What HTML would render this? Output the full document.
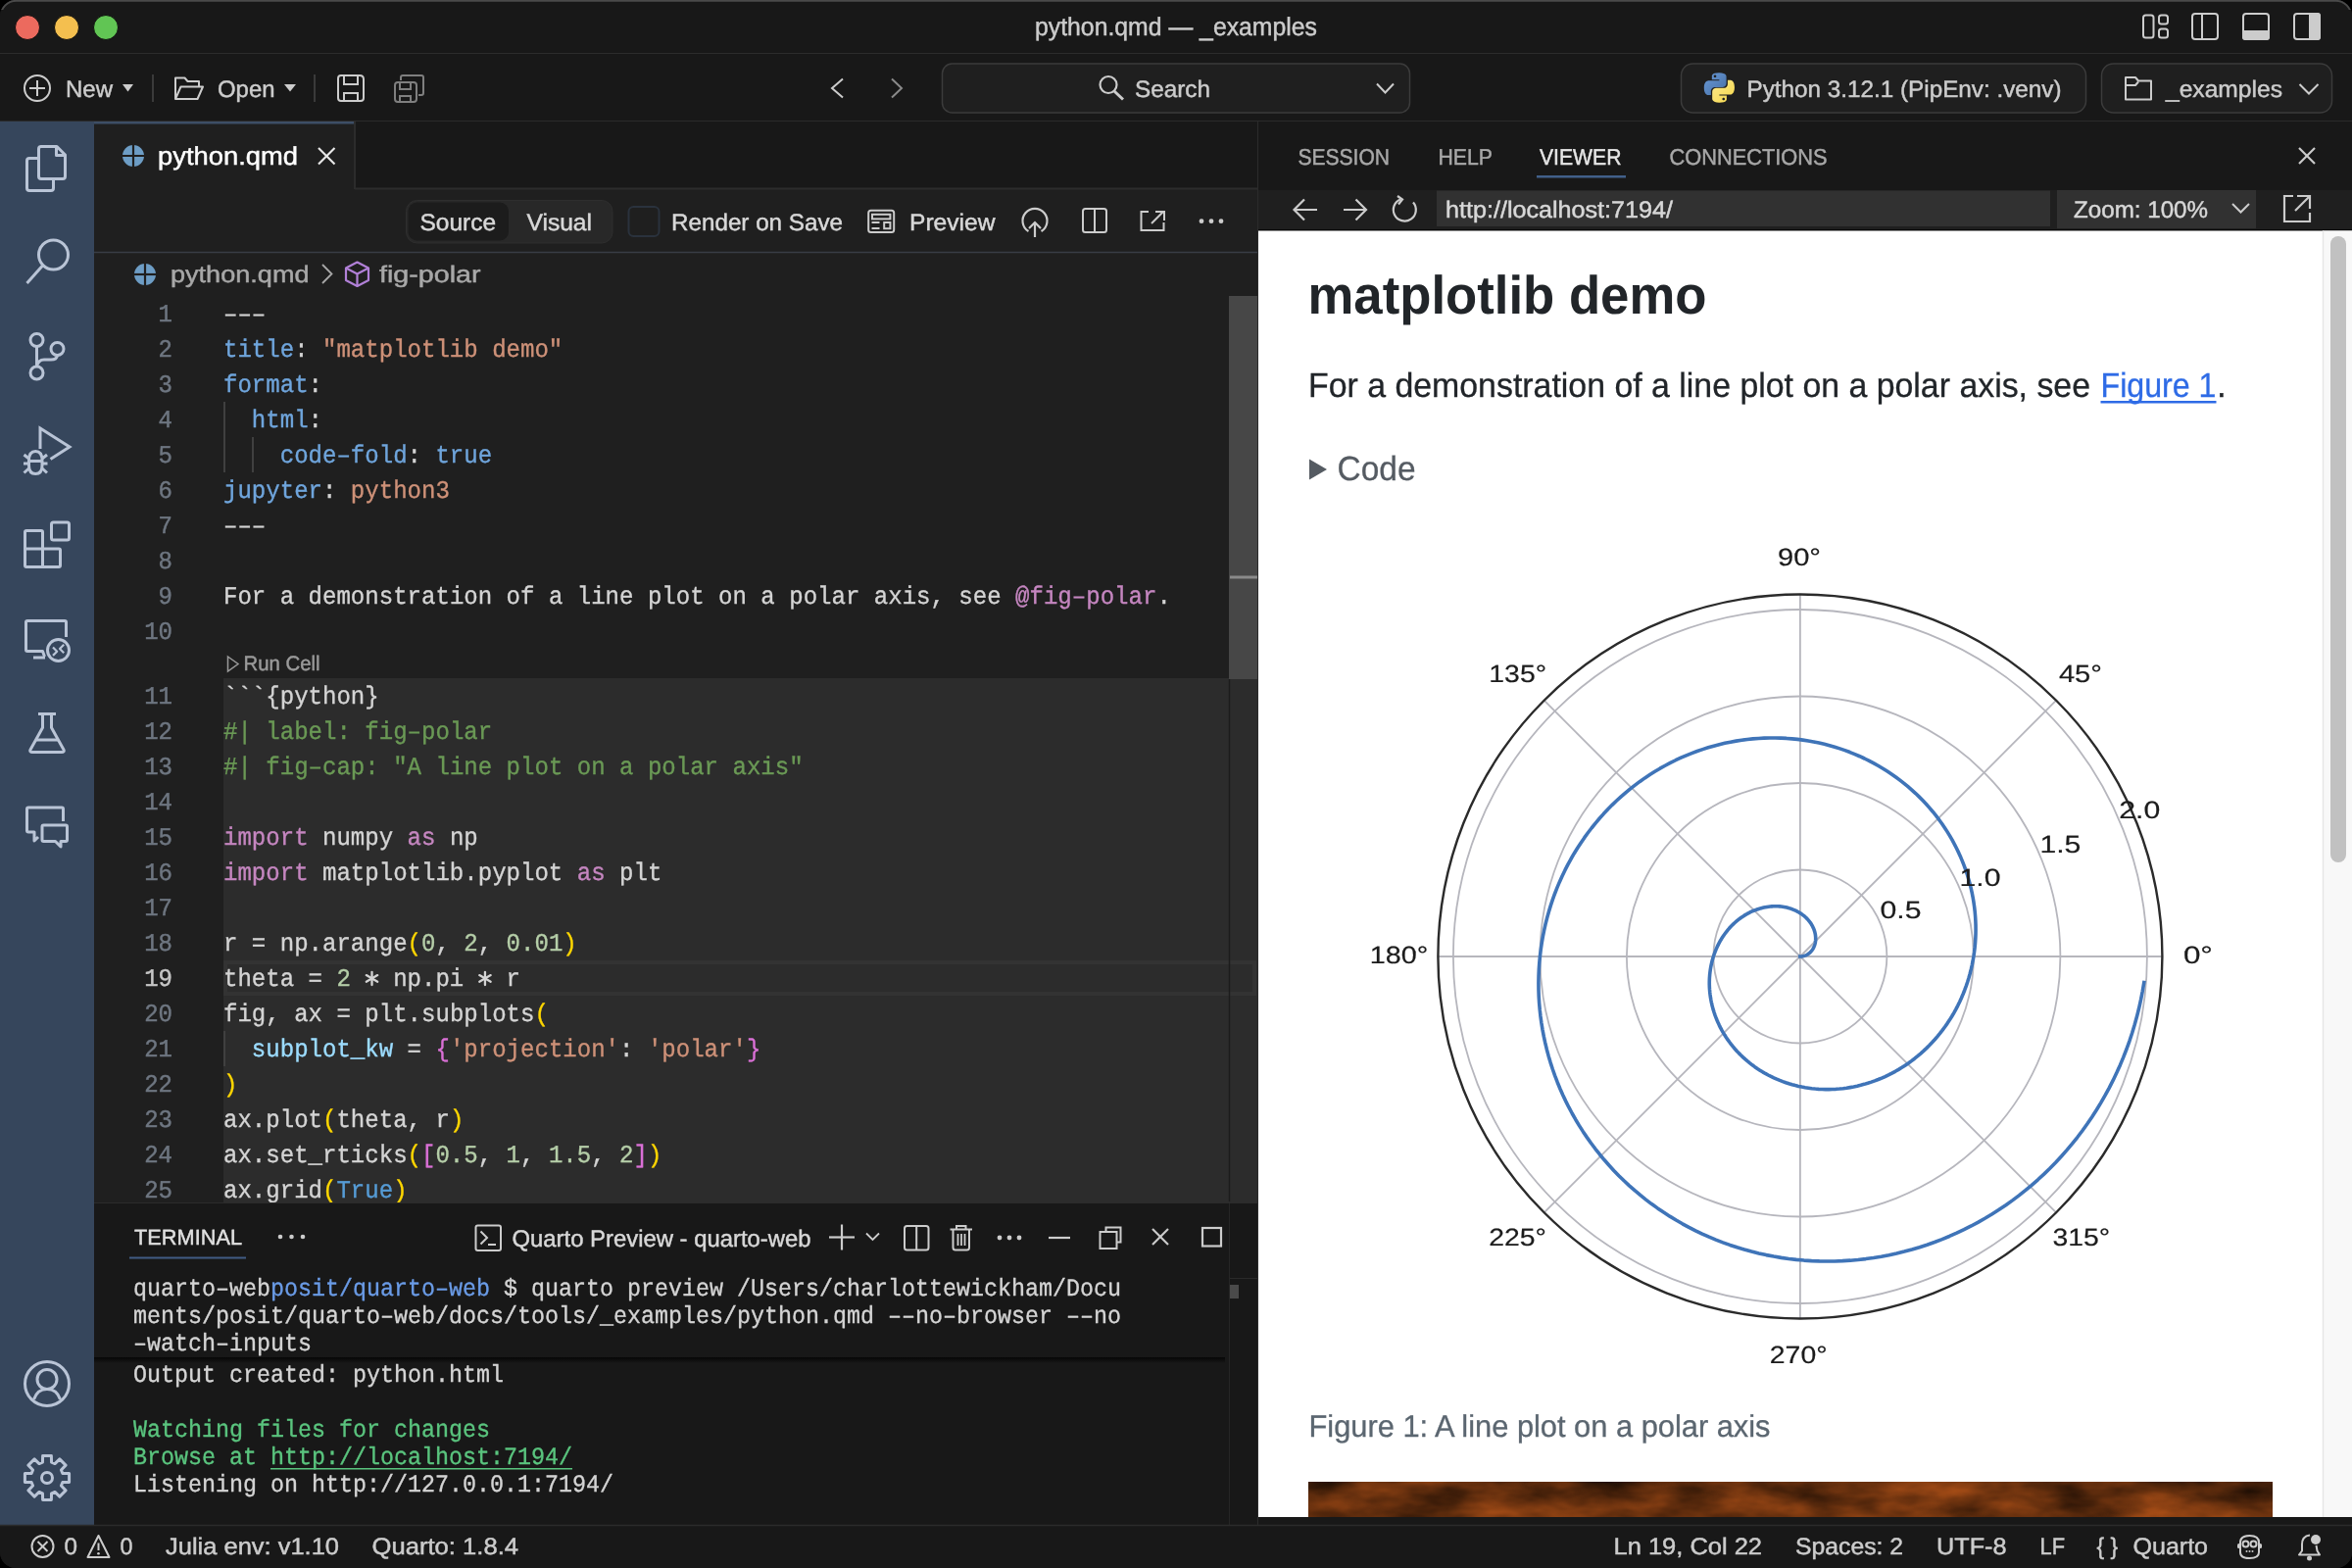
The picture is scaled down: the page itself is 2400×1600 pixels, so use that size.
<!DOCTYPE html>
<html><head><meta charset="utf-8"><title>Positron</title>
<style>html,body{margin:0;padding:0;background:#000;width:2400px;height:1600px;overflow:hidden} svg{display:block;will-change:transform}</style>
</head><body>
<svg width="2400" height="1600" viewBox="0 0 2400 1600" text-rendering="geometricPrecision">
<rect x="0" y="0" width="2400" height="1600" fill="#000"/>
<clipPath id="win"><rect x="0" y="0" width="2400" height="1600" rx="16"/></clipPath>
<g clip-path="url(#win)">
<rect x="0" y="0" width="2400" height="1600" rx="0" fill="#181818"/>
<rect x="0" y="0" width="2400" height="55" rx="0" fill="#181818"/>
<line x1="0" y1="54.5" x2="2400" y2="54.5" stroke="#2c2c2c" stroke-width="1"/>
<circle cx="28" cy="28" r="12.5" fill="#ec6a5e" stroke="#101010" stroke-width="1"/>
<circle cx="68" cy="28" r="12.5" fill="#f4bf4f" stroke="#101010" stroke-width="1"/>
<circle cx="108" cy="28" r="12.5" fill="#61c554" stroke="#101010" stroke-width="1"/>
<text x="1200.00" y="36.00" font-family='"Liberation Sans", sans-serif' font-size="26" fill="#cccccc" text-anchor="middle" font-weight="normal" textLength="288.00" lengthAdjust="spacingAndGlyphs" stroke="#cccccc" stroke-width="0.45">python.qmd — _examples</text>
<rect x="2187" y="15.5" width="10.5" height="23" rx="2.5" fill="none" stroke="#cccccc" stroke-width="2"/>
<rect x="2203" y="15.5" width="9" height="9" rx="2.5" fill="none" stroke="#cccccc" stroke-width="2"/>
<rect x="2203" y="29.5" width="9" height="9" rx="2.5" fill="none" stroke="#cccccc" stroke-width="2"/>
<rect x="2237" y="14" width="26" height="26" rx="3" fill="none" stroke="#cccccc" stroke-width="2"/>
<line x1="2247" y1="14" x2="2247" y2="40" stroke="#cccccc" stroke-width="2"/>
<rect x="2289" y="14" width="26" height="26" rx="3" fill="none" stroke="#cccccc" stroke-width="2"/>
<rect x="2288" y="31" width="28" height="10" rx="3" fill="#cccccc"/>
<rect x="2288" y="31" width="28" height="4" rx="0" fill="#cccccc"/>
<rect x="2341" y="14" width="26" height="26" rx="3" fill="none" stroke="#cccccc" stroke-width="2"/>
<rect x="2356" y="13" width="12" height="28" rx="3" fill="#cccccc"/>
<rect x="2356" y="13" width="5" height="28" rx="0" fill="#cccccc"/>
<rect x="0" y="55" width="2400" height="68" rx="0" fill="#181818"/>
<line x1="0" y1="123.5" x2="2400" y2="123.5" stroke="#2b2b2b" stroke-width="1"/>
<circle cx="38" cy="90" r="13" fill="none" stroke="#cccccc" stroke-width="2"/>
<line x1="38" y1="82" x2="38" y2="98" stroke="#cccccc" stroke-width="2"/>
<line x1="30" y1="90" x2="46" y2="90" stroke="#cccccc" stroke-width="2"/>
<text x="67.00" y="98.50" font-family='"Liberation Sans", sans-serif' font-size="24" fill="#cccccc" text-anchor="start" font-weight="normal" textLength="48.00" lengthAdjust="spacingAndGlyphs" stroke="#cccccc" stroke-width="0.45">New</text>
<path d="M125 86 L136 86 L130.5 93.5 Z" stroke="none" stroke-width="2" fill="#cccccc"/>
<line x1="156" y1="76" x2="156" y2="104" stroke="#3a3a3a" stroke-width="2"/>
<path d="M179 101 L179 79.5 L188.5 79.5 L191.5 83 L203 83 L203 88 M179 101 L184.5 88.5 L207 88.5 L201.5 101 Z" stroke="#cccccc" stroke-width="2" fill="none" stroke-linejoin="round"/>
<text x="222.00" y="98.50" font-family='"Liberation Sans", sans-serif' font-size="24" fill="#cccccc" text-anchor="start" font-weight="normal" textLength="58.50" lengthAdjust="spacingAndGlyphs" stroke="#cccccc" stroke-width="0.45">Open</text>
<path d="M290 86 L302 86 L296 93.5 Z" stroke="none" stroke-width="2" fill="#cccccc"/>
<line x1="321" y1="76" x2="321" y2="104" stroke="#3a3a3a" stroke-width="2"/>
<path d="M345 80 Q345 77 348 77 L367 77 Q371 77 371 81 L371 100 Q371 103 368 103 L348 103 Q345 103 345 100 Z" stroke="#cccccc" stroke-width="2" fill="none"/>
<path d="M351 77 L351 86 L365 86 L365 77" stroke="#cccccc" stroke-width="2" fill="none"/>
<path d="M351 103 L351 95 L365 95 L365 103" stroke="#cccccc" stroke-width="2" fill="none"/>
<path d="M409 82 L409 79 Q409 77 411 77 L430 77 Q432 77 432 79 L432 95 Q432 97 430 97 L427 97" stroke="#7f7f7f" stroke-width="2" fill="none"/>
<path d="M403 87 Q403 84 406 84 L422 84 Q425 84 425 87 L425 101 Q425 104 422 104 L406 104 Q403 104 403 101 Z" stroke="#7f7f7f" stroke-width="2" fill="none"/>
<path d="M408 84 L408 91 L419 91 L419 84" stroke="#7f7f7f" stroke-width="2" fill="none"/>
<path d="M408 104 L408 98 L419 98 L419 104" stroke="#7f7f7f" stroke-width="2" fill="none"/>
<path d="M860 80.5 L849 90 L860 99.5" stroke="#cccccc" stroke-width="2" fill="none"/>
<path d="M910 80.5 L920 90 L910 99.5" stroke="#8a8a8a" stroke-width="2" fill="none"/>
<rect x="961.5" y="65" width="477" height="50" rx="10" fill="#1f1f1f" stroke="#3b3b3b" stroke-width="1.5"/>
<circle cx="1131" cy="86.5" r="8.5" fill="none" stroke="#cccccc" stroke-width="2.2"/>
<line x1="1137" y1="93" x2="1146" y2="101.5" stroke="#cccccc" stroke-width="3"/>
<text x="1158.00" y="98.50" font-family='"Liberation Sans", sans-serif' font-size="24" fill="#cccccc" text-anchor="start" font-weight="normal" textLength="77.00" lengthAdjust="spacingAndGlyphs" stroke="#cccccc" stroke-width="0.45">Search</text>
<path d="M1405 85.5 L1413.5 94.5 L1422 85.5" stroke="#cccccc" stroke-width="2" fill="none"/>
<rect x="1715.5" y="65" width="413" height="50" rx="12" fill="#1f1f1f" stroke="#3b3b3b" stroke-width="1.5"/>
<defs><linearGradient id="pyb" x1="0" y1="0" x2="1" y2="1"><stop offset="0" stop-color="#6a9ad8"/><stop offset="1" stop-color="#456ea3"/></linearGradient><linearGradient id="pyy" x1="0" y1="0" x2="1" y2="1"><stop offset="0" stop-color="#fbe88e"/><stop offset="1" stop-color="#f6d84a"/></linearGradient></defs><g transform="translate(1738.8,73.5) scale(0.335)">
<path d="M46 2 C22 2 24 12.5 24 12.5 L24 23 L46.5 23 L46.5 26 L15 26 C15 26 0 24.5 0 48 C0 71.5 13 70.5 13 70.5 L21 70.5 L21 59.5 C21 59.5 20.5 46.5 33.5 46.5 L55.5 46.5 C55.5 46.5 68 46.5 68 34.5 L68 14.5 C68 14.5 70 2 46 2 Z M33.5 9 C35.8 9 37.5 10.7 37.5 13 C37.5 15.3 35.8 17 33.5 17 C31.2 17 29.5 15.3 29.5 13 C29.5 10.7 31.2 9 33.5 9 Z" fill="url(#pyb)"/>
<path d="M46.5 93 C70.5 93 69 82.5 69 82.5 L69 72 L46.5 72 L46.5 69 L78 69 C78 69 93 70.5 93 47 C93 23.5 80 24.5 80 24.5 L72 24.5 L72 35.5 C72 35.5 72.5 48.5 59.5 48.5 L37.5 48.5 C37.5 48.5 25 48.5 25 60.5 L25 80.5 C25 80.5 23 93 46.5 93 Z M59.5 86 C57.2 86 55.5 84.3 55.5 82 C55.5 79.7 57.2 78 59.5 78 C61.8 78 63.5 79.7 63.5 82 C63.5 84.3 61.8 86 59.5 86 Z" fill="url(#pyy)"/>
</g>
<text x="1782.50" y="98.50" font-family='"Liberation Sans", sans-serif' font-size="24" fill="#cccccc" text-anchor="start" font-weight="normal" textLength="321.00" lengthAdjust="spacingAndGlyphs" stroke="#cccccc" stroke-width="0.45">Python 3.12.1 (PipEnv: .venv)</text>
<rect x="2144.5" y="65" width="235" height="50" rx="12" fill="#1f1f1f" stroke="#3b3b3b" stroke-width="1.5"/>
<path d="M2169 101.5 L2169 79 L2179 79 L2182 82.5 L2195 82.5 L2195 101.5 Z M2169 87 L2179 87 L2182 83.5" stroke="#cccccc" stroke-width="2" fill="none" stroke-linejoin="round"/>
<text x="2210.00" y="98.50" font-family='"Liberation Sans", sans-serif' font-size="24" fill="#cccccc" text-anchor="start" font-weight="normal" textLength="119.00" lengthAdjust="spacingAndGlyphs" stroke="#cccccc" stroke-width="0.45">_examples</text>
<path d="M2346.5 86 L2356 95.5 L2365.5 86" stroke="#cccccc" stroke-width="2" fill="none"/>
<rect x="0" y="124" width="96" height="1432" rx="0" fill="#36465c"/>
<g fill="none" stroke="#b9c4d6" stroke-width="3" stroke-linejoin="round"><path d="M41.5 149.5 L58 149.5 L66.5 158 L66.5 180 Q66.5 182.5 64 182.5 L42 182.5 Q39.5 182.5 39.5 180 L39.5 152 Q39.5 149.5 42 149.5 Z"/><path d="M57.5 149.5 L57.5 158.5 L66.5 158.5"/><path d="M39.5 161.5 L30 161.5 Q27.5 161.5 27.5 164 L27.5 192 Q27.5 194.5 30 194.5 L52 194.5 Q54.5 194.5 54.5 192 L54.5 182.5"/></g>
<g fill="none" stroke="#b9c4d6" stroke-width="3"><circle cx="54.5" cy="260" r="15"/><line x1="43.5" y1="271" x2="27.5" y2="289"/></g>
<g fill="none" stroke="#b9c4d6" stroke-width="3"><circle cx="37.5" cy="347" r="6.5"/><circle cx="58.5" cy="356" r="6.5"/><circle cx="37.5" cy="380.5" r="6.5"/><line x1="37.5" y1="353.5" x2="37.5" y2="374"/><path d="M58.5 362.5 Q58 367 52 367 L45 367 Q39 367 37.5 374"/></g>
<g fill="none" stroke="#b9c4d6" stroke-width="3"><path d="M41 458 L41 437 L71 456 L51.5 468.5"/><path d="M29.5 470 Q29.5 460.5 36.25 460.5 Q43 460.5 43 470 L43 475 Q43 483.5 36.25 483.5 Q29.5 483.5 29.5 475 Z"/><line x1="29.5" y1="470.5" x2="43" y2="470.5"/><line x1="24.5" y1="464" x2="29.5" y2="468"/><line x1="48" y1="464" x2="43" y2="468"/><line x1="24" y1="473" x2="29.5" y2="473"/><line x1="48.5" y1="473" x2="43" y2="473"/><line x1="24.5" y1="482.5" x2="30" y2="477.5"/><line x1="48" y1="482.5" x2="42.5" y2="477.5"/></g>
<g fill="none" stroke="#b9c4d6" stroke-width="3" stroke-linejoin="round"><rect x="52.5" y="533" width="18" height="18" rx="2"/><path d="M25.5 543 Q25.5 541.5 27 541.5 L42 541.5 Q43.5 541.5 43.5 543 L43.5 560 L60 560 Q61.5 560 61.5 561.5 L61.5 577 Q61.5 578.5 60 578.5 L27 578.5 Q25.5 578.5 25.5 577 Z"/><line x1="25.5" y1="560" x2="43.5" y2="560"/><line x1="43.5" y1="560" x2="43.5" y2="578.5"/></g>
<g fill="none" stroke="#b9c4d6" stroke-width="3" stroke-linejoin="round"><path d="M67.5 650 L67.5 635 Q67.5 633.5 66 633.5 L28 633.5 Q26.5 633.5 26.5 635 L26.5 663 Q26.5 664.5 28 664.5 L43.5 664.5 L45.5 670"/><line x1="34" y1="671" x2="46" y2="671"/><circle cx="59.5" cy="663.5" r="11"/><path stroke-width="2.2" d="M54 660.5 L58.2 664.7 L54 668.9 M65.2 657.8 L61 662 L65.2 666.2"/></g>
<g fill="none" stroke="#b9c4d6" stroke-width="3" stroke-linejoin="round"><line x1="39" y1="728.5" x2="57" y2="728.5"/><path d="M43.5 729 L43.5 742.5 L31 765 Q30 767.5 33 767.5 L63 767.5 Q66 767.5 65 765 L52.5 742.5 L52.5 729"/><line x1="37" y1="755" x2="59" y2="755"/></g>
<g fill="none" stroke="#b9c4d6" stroke-width="3" stroke-linejoin="round"><path d="M64.5 838 L64.5 825.5 Q64.5 824 63 824 L29 824 Q27.5 824 27.5 825.5 L27.5 847.5 Q27.5 849 29 849 L35 849 L35 858 L39 854"/><path d="M43 843.5 Q43 842 44.5 842 L67 842 Q68.5 842 68.5 843.5 L68.5 857 Q68.5 858.5 67 858.5 L62 858.5 L62 864 L56.5 858.5 L44.5 858.5 Q43 858.5 43 857 Z"/></g>
<g fill="none" stroke="#b9c4d6" stroke-width="3"><circle cx="48" cy="1412" r="22.5"/><circle cx="48" cy="1407.5" r="10"/><path d="M34.5 1428 Q38 1417.5 48 1417.5 Q58 1417.5 61.5 1428"/></g>
<g fill="none" stroke="#b9c4d6" stroke-width="3" stroke-linejoin="round"><path d="M43.61 1485.42 L52.39 1485.42 L52.55 1492.14 L56.00 1493.57 L60.86 1488.93 L67.07 1495.14 L62.43 1500.00 L63.86 1503.45 L70.58 1503.61 L70.58 1512.39 L63.86 1512.55 L62.43 1516.00 L67.07 1520.86 L60.86 1527.07 L56.00 1522.43 L52.55 1523.86 L52.39 1530.58 L43.61 1530.58 L43.45 1523.86 L40.00 1522.43 L35.14 1527.07 L28.93 1520.86 L33.57 1516.00 L32.14 1512.55 L25.42 1512.39 L25.42 1503.61 L32.14 1503.45 L33.57 1500.00 L28.93 1495.14 L35.14 1488.93 L40.00 1493.57 L43.45 1492.14 Z"/><circle cx="48" cy="1508" r="5.5"/></g>
<rect x="96" y="124" width="1188" height="1104" rx="0" fill="#1f1f1f"/>
<rect x="96" y="124" width="1188" height="69" rx="0" fill="#181818"/>
<line x1="362" y1="192.5" x2="1283" y2="192.5" stroke="#2c2c2c" stroke-width="2"/>
<rect x="96" y="124" width="265" height="69" rx="0" fill="#1f1f1f"/>
<rect x="96" y="124" width="265" height="2.5" rx="0" fill="#3d4e66"/>
<line x1="362" y1="124" x2="362" y2="193" stroke="#2c2c2c" stroke-width="2"/>
<circle cx="136" cy="159" r="11" fill="#6d9dc5"/>
<line x1="136" y1="148" x2="136" y2="170" stroke="#1f1f1f" stroke-width="2.2"/>
<line x1="125" y1="159" x2="147" y2="159" stroke="#1f1f1f" stroke-width="2.2"/>
<text x="161.00" y="168.30" font-family='"Liberation Sans", sans-serif' font-size="26" fill="#ffffff" text-anchor="start" font-weight="normal" textLength="143.00" lengthAdjust="spacingAndGlyphs" stroke="#ffffff" stroke-width="0.45">python.qmd</text>
<line x1="325" y1="151" x2="341.5" y2="167.5" stroke="#e8e8e8" stroke-width="2.2"/>
<line x1="341.5" y1="151" x2="325" y2="167.5" stroke="#e8e8e8" stroke-width="2.2"/>
<rect x="414.5" y="204.5" width="210.5" height="43.5" rx="11" fill="#282828" stroke="#2e2e2e" stroke-width="1"/>
<rect x="416.5" y="206.5" width="102.5" height="39" rx="9" fill="#1c1c1c"/>
<text x="428.50" y="235.00" font-family='"Liberation Sans", sans-serif' font-size="24" fill="#d8d8d8" text-anchor="start" font-weight="normal" textLength="77.50" lengthAdjust="spacingAndGlyphs" stroke="#d8d8d8" stroke-width="0.45">Source</text>
<text x="537.50" y="235.00" font-family='"Liberation Sans", sans-serif' font-size="24" fill="#d8d8d8" text-anchor="start" font-weight="normal" textLength="66.50" lengthAdjust="spacingAndGlyphs" stroke="#d8d8d8" stroke-width="0.45">Visual</text>
<rect x="641.5" y="211" width="31" height="30" rx="5" fill="none" stroke="#2a323d" stroke-width="2"/>
<text x="685.00" y="235.00" font-family='"Liberation Sans", sans-serif' font-size="24" fill="#d8d8d8" text-anchor="start" font-weight="normal" textLength="175.00" lengthAdjust="spacingAndGlyphs" stroke="#d8d8d8" stroke-width="0.45">Render on Save</text>
<rect x="886.2" y="214.8" width="26" height="22.2" rx="2.5" fill="none" stroke="#cccccc" stroke-width="2"/>
<rect x="890" y="218.8" width="18.4" height="4.6" rx="0" fill="none" stroke="#cccccc" stroke-width="2"/>
<line x1="889.5" y1="227" x2="897.5" y2="227" stroke="#cccccc" stroke-width="2"/>
<line x1="889.5" y1="233" x2="897.5" y2="233" stroke="#cccccc" stroke-width="2"/>
<rect x="902.2" y="227" width="6.2" height="6.2" rx="0" fill="none" stroke="#cccccc" stroke-width="2"/>
<text x="928.00" y="234.60" font-family='"Liberation Sans", sans-serif' font-size="24" fill="#d8d8d8" text-anchor="start" font-weight="normal" textLength="87.50" lengthAdjust="spacingAndGlyphs" stroke="#d8d8d8" stroke-width="0.45">Preview</text>
<path d="M1049.5 236 A12.5 12.5 0 1 1 1062.5 236" stroke="#cccccc" stroke-width="2.2" fill="none"/>
<line x1="1056" y1="227" x2="1056" y2="242" stroke="#cccccc" stroke-width="2.2"/>
<path d="M1050 233 L1056 227 L1062 233" stroke="#cccccc" stroke-width="2.2" fill="none"/>
<rect x="1105" y="213" width="24" height="24" rx="2.5" fill="none" stroke="#cccccc" stroke-width="2"/>
<line x1="1117" y1="213" x2="1117" y2="237" stroke="#cccccc" stroke-width="2"/>
<path d="M1172 216 L1164.5 216 L1164.5 235 L1187.5 235 L1187.5 227" stroke="#cccccc" stroke-width="2" fill="none"/>
<line x1="1175" y1="228" x2="1187" y2="216" stroke="#cccccc" stroke-width="2"/>
<path d="M1179 216 L1188 216 L1188 225" stroke="#cccccc" stroke-width="2" fill="none"/>
<circle cx="1226" cy="225.7" r="2.4" fill="#cccccc"/>
<circle cx="1236" cy="225.7" r="2.4" fill="#cccccc"/>
<circle cx="1246" cy="225.7" r="2.4" fill="#cccccc"/>
<line x1="96" y1="257.5" x2="1283" y2="257.5" stroke="#383d45" stroke-width="1.5"/>
<circle cx="148" cy="280" r="11" fill="#6d9dc5"/>
<line x1="148" y1="269" x2="148" y2="291" stroke="#1f1f1f" stroke-width="2.2"/>
<line x1="137" y1="280" x2="159" y2="280" stroke="#1f1f1f" stroke-width="2.2"/>
<text x="174.00" y="288.40" font-family='"Liberation Sans", sans-serif' font-size="24" fill="#a8a8a8" text-anchor="start" font-weight="normal" textLength="141.50" lengthAdjust="spacingAndGlyphs" stroke="#a8a8a8" stroke-width="0.45">python.qmd</text>
<path d="M329 270 L338.5 279.5 L329 289" stroke="#a8a8a8" stroke-width="1.8" fill="none"/>
<g fill="none" stroke="#b180d7" stroke-width="2.2" stroke-linejoin="round"><path d="M364.5 267.5 L376 273.5 L376 286 L364.5 292 L353 286 L353 273.5 Z"/><path d="M353 273.5 L364.5 279.5 L376 273.5 M364.5 279.5 L364.5 292"/></g>
<text x="387.00" y="288.40" font-family='"Liberation Sans", sans-serif' font-size="24" fill="#a8a8a8" text-anchor="start" font-weight="normal" textLength="103.50" lengthAdjust="spacingAndGlyphs" stroke="#a8a8a8" stroke-width="0.45">fig-polar</text>
<rect x="228" y="692" width="1055" height="536" rx="0" fill="#2c2c2c"/>
<rect x="1254" y="302" width="29" height="391" rx="0" fill="#474747"/>
<rect x="1255" y="587.5" width="28" height="3" rx="0" fill="#8a8a8a"/>
<rect x="230" y="982" width="1050" height="32" rx="0" fill="none" stroke="#333333" stroke-width="4"/>
<line x1="1254.5" y1="693" x2="1254.5" y2="1226" stroke="#1c1c1c" stroke-width="1.5"/>
<line x1="229" y1="410" x2="229" y2="482" stroke="#404040" stroke-width="2"/>
<line x1="258" y1="446" x2="258" y2="482" stroke="#404040" stroke-width="2"/>
<line x1="229" y1="1052" x2="229" y2="1088" stroke="#404040" stroke-width="2"/>
<path d="M232.5 670 L243 677.5 L232.5 685 Z" stroke="#9a9a9a" stroke-width="1.5" fill="none"/>
<text x="248.50" y="684.00" font-family='"Liberation Sans", sans-serif' font-size="21" fill="#9a9a9a" text-anchor="start" font-weight="normal" textLength="78.00" lengthAdjust="spacingAndGlyphs" stroke="#9a9a9a" stroke-width="0.45">Run Cell</text>
<text x="176.00" y="328.00" font-family='"Liberation Mono", monospace' font-size="25.5" fill="#6e7681" text-anchor="end" font-weight="normal" textLength="14.43" lengthAdjust="spacingAndGlyphs" stroke="#6e7681" stroke-width="0.45">1</text>
<text x="228.00" y="328" font-family='"Liberation Mono", monospace' font-size="25.5" fill="#d4d4d4" stroke="#d4d4d4" stroke-width="0.35" textLength="43.29" lengthAdjust="spacingAndGlyphs" xml:space="preserve">–––</text>
<text x="176.00" y="364.00" font-family='"Liberation Mono", monospace' font-size="25.5" fill="#6e7681" text-anchor="end" font-weight="normal" textLength="14.43" lengthAdjust="spacingAndGlyphs" stroke="#6e7681" stroke-width="0.45">2</text>
<text x="228.00" y="364" font-family='"Liberation Mono", monospace' font-size="25.5" fill="#6fa5dc" stroke="#6fa5dc" stroke-width="0.35" textLength="72.15" lengthAdjust="spacingAndGlyphs" xml:space="preserve">title</text>
<text x="300.15" y="364" font-family='"Liberation Mono", monospace' font-size="25.5" fill="#d4d4d4" stroke="#d4d4d4" stroke-width="0.35" textLength="14.43" lengthAdjust="spacingAndGlyphs" xml:space="preserve">:</text>
<text x="329.01" y="364" font-family='"Liberation Mono", monospace' font-size="25.5" fill="#ce9178" stroke="#ce9178" stroke-width="0.35" textLength="245.31" lengthAdjust="spacingAndGlyphs" xml:space="preserve">"matplotlib demo"</text>
<text x="176.00" y="400.00" font-family='"Liberation Mono", monospace' font-size="25.5" fill="#6e7681" text-anchor="end" font-weight="normal" textLength="14.43" lengthAdjust="spacingAndGlyphs" stroke="#6e7681" stroke-width="0.45">3</text>
<text x="228.00" y="400" font-family='"Liberation Mono", monospace' font-size="25.5" fill="#6fa5dc" stroke="#6fa5dc" stroke-width="0.35" textLength="86.58" lengthAdjust="spacingAndGlyphs" xml:space="preserve">format</text>
<text x="314.58" y="400" font-family='"Liberation Mono", monospace' font-size="25.5" fill="#d4d4d4" stroke="#d4d4d4" stroke-width="0.35" textLength="14.43" lengthAdjust="spacingAndGlyphs" xml:space="preserve">:</text>
<text x="176.00" y="436.00" font-family='"Liberation Mono", monospace' font-size="25.5" fill="#6e7681" text-anchor="end" font-weight="normal" textLength="14.43" lengthAdjust="spacingAndGlyphs" stroke="#6e7681" stroke-width="0.45">4</text>
<text x="256.86" y="436" font-family='"Liberation Mono", monospace' font-size="25.5" fill="#6fa5dc" stroke="#6fa5dc" stroke-width="0.35" textLength="57.72" lengthAdjust="spacingAndGlyphs" xml:space="preserve">html</text>
<text x="314.58" y="436" font-family='"Liberation Mono", monospace' font-size="25.5" fill="#d4d4d4" stroke="#d4d4d4" stroke-width="0.35" textLength="14.43" lengthAdjust="spacingAndGlyphs" xml:space="preserve">:</text>
<text x="176.00" y="472.00" font-family='"Liberation Mono", monospace' font-size="25.5" fill="#6e7681" text-anchor="end" font-weight="normal" textLength="14.43" lengthAdjust="spacingAndGlyphs" stroke="#6e7681" stroke-width="0.45">5</text>
<text x="285.72" y="472" font-family='"Liberation Mono", monospace' font-size="25.5" fill="#6fa5dc" stroke="#6fa5dc" stroke-width="0.35" textLength="129.87" lengthAdjust="spacingAndGlyphs" xml:space="preserve">code–fold</text>
<text x="415.59" y="472" font-family='"Liberation Mono", monospace' font-size="25.5" fill="#d4d4d4" stroke="#d4d4d4" stroke-width="0.35" textLength="14.43" lengthAdjust="spacingAndGlyphs" xml:space="preserve">:</text>
<text x="444.45" y="472" font-family='"Liberation Mono", monospace' font-size="25.5" fill="#6fa5dc" stroke="#6fa5dc" stroke-width="0.35" textLength="57.72" lengthAdjust="spacingAndGlyphs" xml:space="preserve">true</text>
<text x="176.00" y="508.00" font-family='"Liberation Mono", monospace' font-size="25.5" fill="#6e7681" text-anchor="end" font-weight="normal" textLength="14.43" lengthAdjust="spacingAndGlyphs" stroke="#6e7681" stroke-width="0.45">6</text>
<text x="228.00" y="508" font-family='"Liberation Mono", monospace' font-size="25.5" fill="#6fa5dc" stroke="#6fa5dc" stroke-width="0.35" textLength="101.01" lengthAdjust="spacingAndGlyphs" xml:space="preserve">jupyter</text>
<text x="329.01" y="508" font-family='"Liberation Mono", monospace' font-size="25.5" fill="#d4d4d4" stroke="#d4d4d4" stroke-width="0.35" textLength="14.43" lengthAdjust="spacingAndGlyphs" xml:space="preserve">:</text>
<text x="357.87" y="508" font-family='"Liberation Mono", monospace' font-size="25.5" fill="#ce9178" stroke="#ce9178" stroke-width="0.35" textLength="101.01" lengthAdjust="spacingAndGlyphs" xml:space="preserve">python3</text>
<text x="176.00" y="544.00" font-family='"Liberation Mono", monospace' font-size="25.5" fill="#6e7681" text-anchor="end" font-weight="normal" textLength="14.43" lengthAdjust="spacingAndGlyphs" stroke="#6e7681" stroke-width="0.45">7</text>
<text x="228.00" y="544" font-family='"Liberation Mono", monospace' font-size="25.5" fill="#d4d4d4" stroke="#d4d4d4" stroke-width="0.35" textLength="43.29" lengthAdjust="spacingAndGlyphs" xml:space="preserve">–––</text>
<text x="176.00" y="580.00" font-family='"Liberation Mono", monospace' font-size="25.5" fill="#6e7681" text-anchor="end" font-weight="normal" textLength="14.43" lengthAdjust="spacingAndGlyphs" stroke="#6e7681" stroke-width="0.45">8</text>
<text x="176.00" y="616.00" font-family='"Liberation Mono", monospace' font-size="25.5" fill="#6e7681" text-anchor="end" font-weight="normal" textLength="14.43" lengthAdjust="spacingAndGlyphs" stroke="#6e7681" stroke-width="0.45">9</text>
<text x="228.00" y="616" font-family='"Liberation Mono", monospace' font-size="25.5" fill="#d4d4d4" stroke="#d4d4d4" stroke-width="0.35" textLength="793.65" lengthAdjust="spacingAndGlyphs" xml:space="preserve">For a demonstration of a line plot on a polar axis, see</text>
<text x="1036.08" y="616" font-family='"Liberation Mono", monospace' font-size="25.5" fill="#c586c0" stroke="#c586c0" stroke-width="0.35" textLength="144.30" lengthAdjust="spacingAndGlyphs" xml:space="preserve">@fig–polar</text>
<text x="1180.38" y="616" font-family='"Liberation Mono", monospace' font-size="25.5" fill="#d4d4d4" stroke="#d4d4d4" stroke-width="0.35" textLength="14.43" lengthAdjust="spacingAndGlyphs" xml:space="preserve">.</text>
<text x="176.00" y="652.00" font-family='"Liberation Mono", monospace' font-size="25.5" fill="#6e7681" text-anchor="end" font-weight="normal" textLength="28.86" lengthAdjust="spacingAndGlyphs" stroke="#6e7681" stroke-width="0.45">10</text>
<text x="176.00" y="718.00" font-family='"Liberation Mono", monospace' font-size="25.5" fill="#6e7681" text-anchor="end" font-weight="normal" textLength="28.86" lengthAdjust="spacingAndGlyphs" stroke="#6e7681" stroke-width="0.45">11</text>
<text x="228.00" y="718" font-family='"Liberation Mono", monospace' font-size="25.5" fill="#d4d4d4" stroke="#d4d4d4" stroke-width="0.35" textLength="158.73" lengthAdjust="spacingAndGlyphs" xml:space="preserve">```{python}</text>
<text x="176.00" y="754.00" font-family='"Liberation Mono", monospace' font-size="25.5" fill="#6e7681" text-anchor="end" font-weight="normal" textLength="28.86" lengthAdjust="spacingAndGlyphs" stroke="#6e7681" stroke-width="0.45">12</text>
<text x="228.00" y="754" font-family='"Liberation Mono", monospace' font-size="25.5" fill="#6a9955" stroke="#6a9955" stroke-width="0.35" textLength="274.17" lengthAdjust="spacingAndGlyphs" xml:space="preserve">#| label: fig–polar</text>
<text x="176.00" y="790.00" font-family='"Liberation Mono", monospace' font-size="25.5" fill="#6e7681" text-anchor="end" font-weight="normal" textLength="28.86" lengthAdjust="spacingAndGlyphs" stroke="#6e7681" stroke-width="0.45">13</text>
<text x="228.00" y="790" font-family='"Liberation Mono", monospace' font-size="25.5" fill="#6a9955" stroke="#6a9955" stroke-width="0.35" textLength="591.63" lengthAdjust="spacingAndGlyphs" xml:space="preserve">#| fig–cap: "A line plot on a polar axis"</text>
<text x="176.00" y="826.00" font-family='"Liberation Mono", monospace' font-size="25.5" fill="#6e7681" text-anchor="end" font-weight="normal" textLength="28.86" lengthAdjust="spacingAndGlyphs" stroke="#6e7681" stroke-width="0.45">14</text>
<text x="176.00" y="862.00" font-family='"Liberation Mono", monospace' font-size="25.5" fill="#6e7681" text-anchor="end" font-weight="normal" textLength="28.86" lengthAdjust="spacingAndGlyphs" stroke="#6e7681" stroke-width="0.45">15</text>
<text x="228.00" y="862" font-family='"Liberation Mono", monospace' font-size="25.5" fill="#c586c0" stroke="#c586c0" stroke-width="0.35" textLength="86.58" lengthAdjust="spacingAndGlyphs" xml:space="preserve">import</text>
<text x="329.01" y="862" font-family='"Liberation Mono", monospace' font-size="25.5" fill="#d4d4d4" stroke="#d4d4d4" stroke-width="0.35" textLength="72.15" lengthAdjust="spacingAndGlyphs" xml:space="preserve">numpy</text>
<text x="415.59" y="862" font-family='"Liberation Mono", monospace' font-size="25.5" fill="#c586c0" stroke="#c586c0" stroke-width="0.35" textLength="28.86" lengthAdjust="spacingAndGlyphs" xml:space="preserve">as</text>
<text x="458.88" y="862" font-family='"Liberation Mono", monospace' font-size="25.5" fill="#d4d4d4" stroke="#d4d4d4" stroke-width="0.35" textLength="28.86" lengthAdjust="spacingAndGlyphs" xml:space="preserve">np</text>
<text x="176.00" y="898.00" font-family='"Liberation Mono", monospace' font-size="25.5" fill="#6e7681" text-anchor="end" font-weight="normal" textLength="28.86" lengthAdjust="spacingAndGlyphs" stroke="#6e7681" stroke-width="0.45">16</text>
<text x="228.00" y="898" font-family='"Liberation Mono", monospace' font-size="25.5" fill="#c586c0" stroke="#c586c0" stroke-width="0.35" textLength="86.58" lengthAdjust="spacingAndGlyphs" xml:space="preserve">import</text>
<text x="329.01" y="898" font-family='"Liberation Mono", monospace' font-size="25.5" fill="#d4d4d4" stroke="#d4d4d4" stroke-width="0.35" textLength="245.31" lengthAdjust="spacingAndGlyphs" xml:space="preserve">matplotlib.pyplot</text>
<text x="588.75" y="898" font-family='"Liberation Mono", monospace' font-size="25.5" fill="#c586c0" stroke="#c586c0" stroke-width="0.35" textLength="28.86" lengthAdjust="spacingAndGlyphs" xml:space="preserve">as</text>
<text x="632.04" y="898" font-family='"Liberation Mono", monospace' font-size="25.5" fill="#d4d4d4" stroke="#d4d4d4" stroke-width="0.35" textLength="43.29" lengthAdjust="spacingAndGlyphs" xml:space="preserve">plt</text>
<text x="176.00" y="934.00" font-family='"Liberation Mono", monospace' font-size="25.5" fill="#6e7681" text-anchor="end" font-weight="normal" textLength="28.86" lengthAdjust="spacingAndGlyphs" stroke="#6e7681" stroke-width="0.45">17</text>
<text x="176.00" y="970.00" font-family='"Liberation Mono", monospace' font-size="25.5" fill="#6e7681" text-anchor="end" font-weight="normal" textLength="28.86" lengthAdjust="spacingAndGlyphs" stroke="#6e7681" stroke-width="0.45">18</text>
<text x="228.00" y="970" font-family='"Liberation Mono", monospace' font-size="25.5" fill="#d4d4d4" stroke="#d4d4d4" stroke-width="0.35" textLength="187.59" lengthAdjust="spacingAndGlyphs" xml:space="preserve">r = np.arange</text>
<text x="415.59" y="970" font-family='"Liberation Mono", monospace' font-size="25.5" fill="#ffd700" stroke="#ffd700" stroke-width="0.35" textLength="14.43" lengthAdjust="spacingAndGlyphs" xml:space="preserve">(</text>
<text x="430.02" y="970" font-family='"Liberation Mono", monospace' font-size="25.5" fill="#b5cea8" stroke="#b5cea8" stroke-width="0.35" textLength="14.43" lengthAdjust="spacingAndGlyphs" xml:space="preserve">0</text>
<text x="444.45" y="970" font-family='"Liberation Mono", monospace' font-size="25.5" fill="#d4d4d4" stroke="#d4d4d4" stroke-width="0.35" textLength="14.43" lengthAdjust="spacingAndGlyphs" xml:space="preserve">,</text>
<text x="473.31" y="970" font-family='"Liberation Mono", monospace' font-size="25.5" fill="#b5cea8" stroke="#b5cea8" stroke-width="0.35" textLength="14.43" lengthAdjust="spacingAndGlyphs" xml:space="preserve">2</text>
<text x="487.74" y="970" font-family='"Liberation Mono", monospace' font-size="25.5" fill="#d4d4d4" stroke="#d4d4d4" stroke-width="0.35" textLength="14.43" lengthAdjust="spacingAndGlyphs" xml:space="preserve">,</text>
<text x="516.60" y="970" font-family='"Liberation Mono", monospace' font-size="25.5" fill="#b5cea8" stroke="#b5cea8" stroke-width="0.35" textLength="57.72" lengthAdjust="spacingAndGlyphs" xml:space="preserve">0.01</text>
<text x="574.32" y="970" font-family='"Liberation Mono", monospace' font-size="25.5" fill="#ffd700" stroke="#ffd700" stroke-width="0.35" textLength="14.43" lengthAdjust="spacingAndGlyphs" xml:space="preserve">)</text>
<text x="176.00" y="1006.00" font-family='"Liberation Mono", monospace' font-size="25.5" fill="#c6c6c6" text-anchor="end" font-weight="normal" textLength="28.86" lengthAdjust="spacingAndGlyphs" stroke="#c6c6c6" stroke-width="0.45">19</text>
<text x="228.00" y="1006" font-family='"Liberation Mono", monospace' font-size="25.5" fill="#d4d4d4" stroke="#d4d4d4" stroke-width="0.35" textLength="101.01" lengthAdjust="spacingAndGlyphs" xml:space="preserve">theta =</text>
<text x="343.44" y="1006" font-family='"Liberation Mono", monospace' font-size="25.5" fill="#b5cea8" stroke="#b5cea8" stroke-width="0.35" textLength="14.43" lengthAdjust="spacingAndGlyphs" xml:space="preserve">2</text>
<text x="401.16" y="1006" font-family='"Liberation Mono", monospace' font-size="25.5" fill="#d4d4d4" stroke="#d4d4d4" stroke-width="0.35" textLength="129.87" lengthAdjust="spacingAndGlyphs" xml:space="preserve">np.pi   r</text>
<text x="176.00" y="1042.00" font-family='"Liberation Mono", monospace' font-size="25.5" fill="#6e7681" text-anchor="end" font-weight="normal" textLength="28.86" lengthAdjust="spacingAndGlyphs" stroke="#6e7681" stroke-width="0.45">20</text>
<text x="228.00" y="1042" font-family='"Liberation Mono", monospace' font-size="25.5" fill="#d4d4d4" stroke="#d4d4d4" stroke-width="0.35" textLength="317.46" lengthAdjust="spacingAndGlyphs" xml:space="preserve">fig, ax = plt.subplots</text>
<text x="545.46" y="1042" font-family='"Liberation Mono", monospace' font-size="25.5" fill="#ffd700" stroke="#ffd700" stroke-width="0.35" textLength="14.43" lengthAdjust="spacingAndGlyphs" xml:space="preserve">(</text>
<text x="176.00" y="1078.00" font-family='"Liberation Mono", monospace' font-size="25.5" fill="#6e7681" text-anchor="end" font-weight="normal" textLength="28.86" lengthAdjust="spacingAndGlyphs" stroke="#6e7681" stroke-width="0.45">21</text>
<text x="256.86" y="1078" font-family='"Liberation Mono", monospace' font-size="25.5" fill="#9cdcfe" stroke="#9cdcfe" stroke-width="0.35" textLength="144.30" lengthAdjust="spacingAndGlyphs" xml:space="preserve">subplot_kw</text>
<text x="415.59" y="1078" font-family='"Liberation Mono", monospace' font-size="25.5" fill="#d4d4d4" stroke="#d4d4d4" stroke-width="0.35" textLength="14.43" lengthAdjust="spacingAndGlyphs" xml:space="preserve">=</text>
<text x="444.45" y="1078" font-family='"Liberation Mono", monospace' font-size="25.5" fill="#da70d6" stroke="#da70d6" stroke-width="0.35" textLength="14.43" lengthAdjust="spacingAndGlyphs" xml:space="preserve">{</text>
<text x="458.88" y="1078" font-family='"Liberation Mono", monospace' font-size="25.5" fill="#ce9178" stroke="#ce9178" stroke-width="0.35" textLength="173.16" lengthAdjust="spacingAndGlyphs" xml:space="preserve">'projection'</text>
<text x="632.04" y="1078" font-family='"Liberation Mono", monospace' font-size="25.5" fill="#d4d4d4" stroke="#d4d4d4" stroke-width="0.35" textLength="14.43" lengthAdjust="spacingAndGlyphs" xml:space="preserve">:</text>
<text x="660.90" y="1078" font-family='"Liberation Mono", monospace' font-size="25.5" fill="#ce9178" stroke="#ce9178" stroke-width="0.35" textLength="101.01" lengthAdjust="spacingAndGlyphs" xml:space="preserve">'polar'</text>
<text x="761.91" y="1078" font-family='"Liberation Mono", monospace' font-size="25.5" fill="#da70d6" stroke="#da70d6" stroke-width="0.35" textLength="14.43" lengthAdjust="spacingAndGlyphs" xml:space="preserve">}</text>
<text x="176.00" y="1114.00" font-family='"Liberation Mono", monospace' font-size="25.5" fill="#6e7681" text-anchor="end" font-weight="normal" textLength="28.86" lengthAdjust="spacingAndGlyphs" stroke="#6e7681" stroke-width="0.45">22</text>
<text x="228.00" y="1114" font-family='"Liberation Mono", monospace' font-size="25.5" fill="#ffd700" stroke="#ffd700" stroke-width="0.35" textLength="14.43" lengthAdjust="spacingAndGlyphs" xml:space="preserve">)</text>
<text x="176.00" y="1150.00" font-family='"Liberation Mono", monospace' font-size="25.5" fill="#6e7681" text-anchor="end" font-weight="normal" textLength="28.86" lengthAdjust="spacingAndGlyphs" stroke="#6e7681" stroke-width="0.45">23</text>
<text x="228.00" y="1150" font-family='"Liberation Mono", monospace' font-size="25.5" fill="#d4d4d4" stroke="#d4d4d4" stroke-width="0.35" textLength="101.01" lengthAdjust="spacingAndGlyphs" xml:space="preserve">ax.plot</text>
<text x="329.01" y="1150" font-family='"Liberation Mono", monospace' font-size="25.5" fill="#ffd700" stroke="#ffd700" stroke-width="0.35" textLength="14.43" lengthAdjust="spacingAndGlyphs" xml:space="preserve">(</text>
<text x="343.44" y="1150" font-family='"Liberation Mono", monospace' font-size="25.5" fill="#d4d4d4" stroke="#d4d4d4" stroke-width="0.35" textLength="115.44" lengthAdjust="spacingAndGlyphs" xml:space="preserve">theta, r</text>
<text x="458.88" y="1150" font-family='"Liberation Mono", monospace' font-size="25.5" fill="#ffd700" stroke="#ffd700" stroke-width="0.35" textLength="14.43" lengthAdjust="spacingAndGlyphs" xml:space="preserve">)</text>
<text x="176.00" y="1186.00" font-family='"Liberation Mono", monospace' font-size="25.5" fill="#6e7681" text-anchor="end" font-weight="normal" textLength="28.86" lengthAdjust="spacingAndGlyphs" stroke="#6e7681" stroke-width="0.45">24</text>
<text x="228.00" y="1186" font-family='"Liberation Mono", monospace' font-size="25.5" fill="#d4d4d4" stroke="#d4d4d4" stroke-width="0.35" textLength="187.59" lengthAdjust="spacingAndGlyphs" xml:space="preserve">ax.set_rticks</text>
<text x="415.59" y="1186" font-family='"Liberation Mono", monospace' font-size="25.5" fill="#ffd700" stroke="#ffd700" stroke-width="0.35" textLength="14.43" lengthAdjust="spacingAndGlyphs" xml:space="preserve">(</text>
<text x="430.02" y="1186" font-family='"Liberation Mono", monospace' font-size="25.5" fill="#da70d6" stroke="#da70d6" stroke-width="0.35" textLength="14.43" lengthAdjust="spacingAndGlyphs" xml:space="preserve">[</text>
<text x="444.45" y="1186" font-family='"Liberation Mono", monospace' font-size="25.5" fill="#b5cea8" stroke="#b5cea8" stroke-width="0.35" textLength="43.29" lengthAdjust="spacingAndGlyphs" xml:space="preserve">0.5</text>
<text x="487.74" y="1186" font-family='"Liberation Mono", monospace' font-size="25.5" fill="#d4d4d4" stroke="#d4d4d4" stroke-width="0.35" textLength="14.43" lengthAdjust="spacingAndGlyphs" xml:space="preserve">,</text>
<text x="516.60" y="1186" font-family='"Liberation Mono", monospace' font-size="25.5" fill="#b5cea8" stroke="#b5cea8" stroke-width="0.35" textLength="14.43" lengthAdjust="spacingAndGlyphs" xml:space="preserve">1</text>
<text x="531.03" y="1186" font-family='"Liberation Mono", monospace' font-size="25.5" fill="#d4d4d4" stroke="#d4d4d4" stroke-width="0.35" textLength="14.43" lengthAdjust="spacingAndGlyphs" xml:space="preserve">,</text>
<text x="559.89" y="1186" font-family='"Liberation Mono", monospace' font-size="25.5" fill="#b5cea8" stroke="#b5cea8" stroke-width="0.35" textLength="43.29" lengthAdjust="spacingAndGlyphs" xml:space="preserve">1.5</text>
<text x="603.18" y="1186" font-family='"Liberation Mono", monospace' font-size="25.5" fill="#d4d4d4" stroke="#d4d4d4" stroke-width="0.35" textLength="14.43" lengthAdjust="spacingAndGlyphs" xml:space="preserve">,</text>
<text x="632.04" y="1186" font-family='"Liberation Mono", monospace' font-size="25.5" fill="#b5cea8" stroke="#b5cea8" stroke-width="0.35" textLength="14.43" lengthAdjust="spacingAndGlyphs" xml:space="preserve">2</text>
<text x="646.47" y="1186" font-family='"Liberation Mono", monospace' font-size="25.5" fill="#da70d6" stroke="#da70d6" stroke-width="0.35" textLength="14.43" lengthAdjust="spacingAndGlyphs" xml:space="preserve">]</text>
<text x="660.90" y="1186" font-family='"Liberation Mono", monospace' font-size="25.5" fill="#ffd700" stroke="#ffd700" stroke-width="0.35" textLength="14.43" lengthAdjust="spacingAndGlyphs" xml:space="preserve">)</text>
<text x="176.00" y="1222.00" font-family='"Liberation Mono", monospace' font-size="25.5" fill="#6e7681" text-anchor="end" font-weight="normal" textLength="28.86" lengthAdjust="spacingAndGlyphs" stroke="#6e7681" stroke-width="0.45">25</text>
<text x="228.00" y="1222" font-family='"Liberation Mono", monospace' font-size="25.5" fill="#d4d4d4" stroke="#d4d4d4" stroke-width="0.35" textLength="101.01" lengthAdjust="spacingAndGlyphs" xml:space="preserve">ax.grid</text>
<text x="329.01" y="1222" font-family='"Liberation Mono", monospace' font-size="25.5" fill="#ffd700" stroke="#ffd700" stroke-width="0.35" textLength="14.43" lengthAdjust="spacingAndGlyphs" xml:space="preserve">(</text>
<text x="343.44" y="1222" font-family='"Liberation Mono", monospace' font-size="25.5" fill="#569cd6" stroke="#569cd6" stroke-width="0.35" textLength="57.72" lengthAdjust="spacingAndGlyphs" xml:space="preserve">True</text>
<text x="401.16" y="1222" font-family='"Liberation Mono", monospace' font-size="25.5" fill="#ffd700" stroke="#ffd700" stroke-width="0.35" textLength="14.43" lengthAdjust="spacingAndGlyphs" xml:space="preserve">)</text>
<line x1="379.51" y1="991.80" x2="379.51" y2="1005.00" stroke="#d4d4d4" stroke-width="2.3" stroke-linecap="round"/>
<line x1="373.80" y1="995.10" x2="385.23" y2="1001.70" stroke="#d4d4d4" stroke-width="2.3" stroke-linecap="round"/>
<line x1="373.80" y1="1001.70" x2="385.23" y2="995.10" stroke="#d4d4d4" stroke-width="2.3" stroke-linecap="round"/>
<line x1="494.95" y1="991.80" x2="494.95" y2="1005.00" stroke="#d4d4d4" stroke-width="2.3" stroke-linecap="round"/>
<line x1="489.24" y1="995.10" x2="500.67" y2="1001.70" stroke="#d4d4d4" stroke-width="2.3" stroke-linecap="round"/>
<line x1="489.24" y1="1001.70" x2="500.67" y2="995.10" stroke="#d4d4d4" stroke-width="2.3" stroke-linecap="round"/>
<rect x="96" y="1228" width="1188" height="328" rx="0" fill="#181818"/>
<line x1="96" y1="1227.5" x2="1283" y2="1227.5" stroke="#2b2b2b" stroke-width="1"/>
<text x="137.00" y="1269.80" font-family='"Liberation Sans", sans-serif' font-size="22" fill="#e0e0e0" text-anchor="start" font-weight="normal" textLength="110.00" lengthAdjust="spacingAndGlyphs" stroke="#e0e0e0" stroke-width="0.45">TERMINAL</text>
<rect x="132" y="1282.5" width="119" height="2" rx="0" fill="#415c84"/>
<circle cx="286" cy="1262" r="2.3" fill="#cccccc"/>
<circle cx="297.5" cy="1262" r="2.3" fill="#cccccc"/>
<circle cx="309" cy="1262" r="2.3" fill="#cccccc"/>
<rect x="485.5" y="1250.5" width="25.5" height="25.5" rx="2" fill="none" stroke="#cccccc" stroke-width="2"/>
<path d="M490.5 1256.5 L497 1263 L490.5 1269.5" stroke="#cccccc" stroke-width="2" fill="none"/>
<line x1="498" y1="1270" x2="506" y2="1270" stroke="#cccccc" stroke-width="2"/>
<text x="522.50" y="1272.00" font-family='"Liberation Sans", sans-serif' font-size="24" fill="#d8d8d8" text-anchor="start" font-weight="normal" textLength="305.00" lengthAdjust="spacingAndGlyphs" stroke="#d8d8d8" stroke-width="0.45">Quarto Preview - quarto-web</text>
<line x1="859" y1="1249.5" x2="859" y2="1275.5" stroke="#cccccc" stroke-width="2.2"/>
<line x1="846" y1="1262.5" x2="872" y2="1262.5" stroke="#cccccc" stroke-width="2.2"/>
<path d="M884 1258.5 L890.5 1265 L897 1258.5" stroke="#cccccc" stroke-width="1.8" fill="none"/>
<rect x="923" y="1251" width="24.5" height="24.5" rx="2.5" fill="none" stroke="#cccccc" stroke-width="2"/>
<line x1="935.2" y1="1251" x2="935.2" y2="1275.5" stroke="#cccccc" stroke-width="2"/>
<line x1="969.5" y1="1254.5" x2="992" y2="1254.5" stroke="#cccccc" stroke-width="2"/>
<path d="M976 1254.5 L976 1251 L985.5 1251 L985.5 1254.5" stroke="#cccccc" stroke-width="2" fill="none"/>
<path d="M972.5 1254.5 L972.5 1273 Q972.5 1275.5 975 1275.5 L986.5 1275.5 Q989 1275.5 989 1273 L989 1254.5" stroke="#cccccc" stroke-width="2" fill="none"/>
<line x1="977.5" y1="1259" x2="977.5" y2="1271" stroke="#cccccc" stroke-width="1.8"/>
<line x1="981" y1="1259" x2="981" y2="1271" stroke="#cccccc" stroke-width="1.8"/>
<line x1="984.5" y1="1259" x2="984.5" y2="1271" stroke="#cccccc" stroke-width="1.8"/>
<circle cx="1020" cy="1263" r="2.4" fill="#cccccc"/>
<circle cx="1030" cy="1263" r="2.4" fill="#cccccc"/>
<circle cx="1040" cy="1263" r="2.4" fill="#cccccc"/>
<line x1="1070" y1="1263" x2="1092" y2="1263" stroke="#cccccc" stroke-width="2.2"/>
<rect x="1128.5" y="1252.5" width="15" height="15" rx="0" fill="none" stroke="#cccccc" stroke-width="2"/>
<rect x="1122.5" y="1257" width="17" height="17" rx="0" fill="#181818" stroke="#cccccc" stroke-width="2"/>
<line x1="1176" y1="1254" x2="1192" y2="1270" stroke="#cccccc" stroke-width="2.2"/>
<line x1="1192" y1="1254" x2="1176" y2="1270" stroke="#cccccc" stroke-width="2.2"/>
<rect x="1227" y="1253" width="19" height="18.5" rx="0" fill="none" stroke="#cccccc" stroke-width="2.2"/>
<text x="136.00" y="1322" font-family='"Liberation Mono", monospace' font-size="25" fill="#d4d4d4" stroke="#d4d4d4" stroke-width="0.35" textLength="140.00" lengthAdjust="spacingAndGlyphs" xml:space="preserve">quarto–web</text>
<text x="276.00" y="1322" font-family='"Liberation Mono", monospace' font-size="25" fill="#6a9be6" stroke="#6a9be6" stroke-width="0.35" textLength="224.00" lengthAdjust="spacingAndGlyphs" xml:space="preserve">posit/quarto–web</text>
<text x="500.00" y="1322" font-family='"Liberation Mono", monospace' font-size="25" fill="#d4d4d4" stroke="#d4d4d4" stroke-width="0.35" textLength="644.00" lengthAdjust="spacingAndGlyphs" xml:space="preserve"> $ quarto preview /Users/charlottewickham/Docu</text>
<text x="136.00" y="1350" font-family='"Liberation Mono", monospace' font-size="25" fill="#d4d4d4" stroke="#d4d4d4" stroke-width="0.35" textLength="1008.00" lengthAdjust="spacingAndGlyphs" xml:space="preserve">ments/posit/quarto–web/docs/tools/_examples/python.qmd ––no–browser ––no</text>
<text x="136.00" y="1378" font-family='"Liberation Mono", monospace' font-size="25" fill="#d4d4d4" stroke="#d4d4d4" stroke-width="0.35" textLength="182.00" lengthAdjust="spacingAndGlyphs" xml:space="preserve">–watch–inputs</text>
<defs><linearGradient id="shd" x1="0" y1="0" x2="0" y2="1"><stop offset="0" stop-color="#000" stop-opacity="0.75"/><stop offset="1" stop-color="#000" stop-opacity="0"/></linearGradient></defs>
<rect x="96" y="1385" width="1154" height="6" rx="0" fill="url(#shd)"/>
<text x="136.00" y="1410" font-family='"Liberation Mono", monospace' font-size="25" fill="#d4d4d4" stroke="#d4d4d4" stroke-width="0.35" textLength="378.00" lengthAdjust="spacingAndGlyphs" xml:space="preserve">Output created: python.html</text>
<text x="136.00" y="1466" font-family='"Liberation Mono", monospace' font-size="25" fill="#5ac47e" stroke="#5ac47e" stroke-width="0.35" textLength="364.00" lengthAdjust="spacingAndGlyphs" xml:space="preserve">Watching files for changes</text>
<text x="136.00" y="1494" font-family='"Liberation Mono", monospace' font-size="25" fill="#5ac47e" stroke="#5ac47e" stroke-width="0.35" textLength="448.00" lengthAdjust="spacingAndGlyphs" xml:space="preserve">Browse at http://localhost:7194/</text>
<rect x="276" y="1498" width="308" height="1.5" rx="0" fill="#5ac47e"/>
<text x="136.00" y="1522" font-family='"Liberation Mono", monospace' font-size="25" fill="#d4d4d4" stroke="#d4d4d4" stroke-width="0.35" textLength="490.00" lengthAdjust="spacingAndGlyphs" xml:space="preserve">Listening on http://127.0.0.1:7194/</text>
<line x1="1254.5" y1="1228" x2="1254.5" y2="1556" stroke="#262626" stroke-width="1"/>
<line x1="1255" y1="1304.5" x2="1283" y2="1304.5" stroke="#2a2a2a" stroke-width="1"/>
<rect x="1255" y="1311" width="9" height="14" rx="0" fill="#4a4a4a"/>
<rect x="1283" y="124" width="1117" height="1432" rx="0" fill="#181818"/>
<line x1="1283.5" y1="124" x2="1283.5" y2="1556" stroke="#2b2b2b" stroke-width="1"/>
<text x="1324.50" y="167.70" font-family='"Liberation Sans", sans-serif' font-size="23" fill="#a8a8a8" text-anchor="start" font-weight="normal" textLength="93.50" lengthAdjust="spacingAndGlyphs" stroke="#a8a8a8" stroke-width="0.45">SESSION</text>
<text x="1467.50" y="167.70" font-family='"Liberation Sans", sans-serif' font-size="23" fill="#a8a8a8" text-anchor="start" font-weight="normal" textLength="55.50" lengthAdjust="spacingAndGlyphs" stroke="#a8a8a8" stroke-width="0.45">HELP</text>
<text x="1571.00" y="167.70" font-family='"Liberation Sans", sans-serif' font-size="23" fill="#e6e6e6" text-anchor="start" font-weight="normal" textLength="83.50" lengthAdjust="spacingAndGlyphs" stroke="#e6e6e6" stroke-width="0.45">VIEWER</text>
<rect x="1568" y="179" width="91" height="2.5" rx="0" fill="#41608a"/>
<text x="1703.50" y="167.70" font-family='"Liberation Sans", sans-serif' font-size="23" fill="#a8a8a8" text-anchor="start" font-weight="normal" textLength="161.00" lengthAdjust="spacingAndGlyphs" stroke="#a8a8a8" stroke-width="0.45">CONNECTIONS</text>
<line x1="2346" y1="151" x2="2362" y2="167" stroke="#cccccc" stroke-width="2.2"/>
<line x1="2362" y1="151" x2="2346" y2="167" stroke="#cccccc" stroke-width="2.2"/>
<rect x="1284" y="194" width="1116" height="40" rx="0" fill="#1f1f1f"/>
<rect x="1284" y="234" width="1116" height="1.5" rx="0" fill="#0c0c0c"/>
<path d="M1331 203.5 L1320.5 214 L1331 224.5 M1320.5 214 L1344 214" stroke="#cccccc" stroke-width="2.2" fill="none"/>
<path d="M1383.5 203.5 L1394 214 L1383.5 224.5 M1394 214 L1371 214" stroke="#cccccc" stroke-width="2.2" fill="none"/>
<path d="M1442 206.5 A11.5 11.5 0 1 1 1429.5 203.2" stroke="#cccccc" stroke-width="2.2" fill="none"/>
<path d="M1426 200 L1431 203.5 L1427 208.5" stroke="#cccccc" stroke-width="2.2" fill="none"/>
<rect x="1466" y="194.5" width="626" height="36.5" rx="0" fill="#313131"/>
<text x="1475.00" y="222.00" font-family='"Liberation Sans", sans-serif' font-size="24" fill="#d8d8d8" text-anchor="start" font-weight="normal" textLength="232.00" lengthAdjust="spacingAndGlyphs" stroke="#d8d8d8" stroke-width="0.45">http://localhost:7194/</text>
<rect x="2099" y="194" width="203" height="39" rx="0" fill="#313131"/>
<text x="2116.00" y="222.00" font-family='"Liberation Sans", sans-serif' font-size="24" fill="#d8d8d8" text-anchor="start" font-weight="normal" textLength="137.00" lengthAdjust="spacingAndGlyphs" stroke="#d8d8d8" stroke-width="0.45">Zoom: 100%</text>
<path d="M2278 208 L2286.5 216.5 L2295 208" stroke="#cccccc" stroke-width="2" fill="none"/>
<path d="M2340 200 L2331 200 L2331 226 L2357 226 L2357 217" stroke="#cccccc" stroke-width="2.2" fill="none"/>
<line x1="2342" y1="215" x2="2356" y2="201" stroke="#cccccc" stroke-width="2.2"/>
<path d="M2344 200 L2357 200 L2357 213" stroke="#cccccc" stroke-width="2.2" fill="none"/>
<rect x="1284" y="235.5" width="1116" height="1312.5" rx="0" fill="#ffffff"/>
<rect x="2370" y="235.5" width="30" height="1312.5" rx="0" fill="#f8f8f8"/>
<line x1="2370.5" y1="235.5" x2="2370.5" y2="1548" stroke="#e6e6e6" stroke-width="1.5"/>
<rect x="2378" y="241" width="16" height="639" rx="8" fill="#c1c1c1"/>
<rect x="1284" y="1548" width="1116" height="8" rx="0" fill="#181818"/>
<text x="1334.50" y="320.00" font-family='"Liberation Sans", sans-serif' font-size="55" fill="#212529" text-anchor="start" font-weight="bold" textLength="407.00" lengthAdjust="spacingAndGlyphs">matplotlib demo</text>
<text x="1335.00" y="405.00" font-family='"Liberation Sans", sans-serif' font-size="35" fill="#212529" text-anchor="start" font-weight="normal" textLength="798.00" lengthAdjust="spacingAndGlyphs" stroke="#212529" stroke-width="0.3">For a demonstration of a line plot on a polar axis, see</text>
<text x="2143.50" y="405.00" font-family='"Liberation Sans", sans-serif' font-size="35" fill="#2e6be6" text-anchor="start" font-weight="normal" textLength="118.00" lengthAdjust="spacingAndGlyphs" stroke="#2e6be6" stroke-width="0.3">Figure 1</text>
<rect x="2143.5" y="409" width="118" height="2.5" rx="0" fill="#2e6be6"/>
<text x="2262.00" y="405.00" font-family='"Liberation Sans", sans-serif' font-size="35" fill="#212529" text-anchor="start" font-weight="normal" stroke="#212529" stroke-width="0.3">.</text>
<path d="M1336 468.5 L1354 479 L1336 489.5 Z" stroke="none" stroke-width="2" fill="#555b62"/>
<text x="1364.50" y="489.50" font-family='"Liberation Sans", sans-serif' font-size="35" fill="#555b62" text-anchor="start" font-weight="normal" textLength="80.00" lengthAdjust="spacingAndGlyphs" stroke="#555b62" stroke-width="0.3">Code</text>
<line x1="1836.9" y1="976.0" x2="2206.40" y2="976.00" stroke="#b6b6bd" stroke-width="1.8"/>
<line x1="1836.9" y1="976.0" x2="2098.18" y2="714.72" stroke="#b6b6bd" stroke-width="1.8"/>
<line x1="1836.9" y1="976.0" x2="1836.90" y2="606.50" stroke="#b6b6bd" stroke-width="1.8"/>
<line x1="1836.9" y1="976.0" x2="1575.62" y2="714.72" stroke="#b6b6bd" stroke-width="1.8"/>
<line x1="1836.9" y1="976.0" x2="1467.40" y2="976.00" stroke="#b6b6bd" stroke-width="1.8"/>
<line x1="1836.9" y1="976.0" x2="1575.62" y2="1237.28" stroke="#b6b6bd" stroke-width="1.8"/>
<line x1="1836.9" y1="976.0" x2="1836.90" y2="1345.50" stroke="#b6b6bd" stroke-width="1.8"/>
<line x1="1836.9" y1="976.0" x2="2098.18" y2="1237.28" stroke="#b6b6bd" stroke-width="1.8"/>
<circle cx="1836.9" cy="976.0" r="88.50" fill="none" stroke="#b6b6bd" stroke-width="1.8"/>
<circle cx="1836.9" cy="976.0" r="177.00" fill="none" stroke="#b6b6bd" stroke-width="1.8"/>
<circle cx="1836.9" cy="976.0" r="265.50" fill="none" stroke="#b6b6bd" stroke-width="1.8"/>
<circle cx="1836.9" cy="976.0" r="354.00" fill="none" stroke="#b6b6bd" stroke-width="1.8"/>
<polyline points="1836.90,976.00 1837.61,975.98 1838.31,975.93 1839.02,975.84 1839.72,975.72 1840.41,975.56 1841.10,975.36 1841.78,975.13 1842.45,974.87 1843.11,974.57 1843.76,974.24 1844.39,973.87 1845.01,973.48 1845.62,973.05 1846.20,972.58 1846.77,972.09 1847.32,971.57 1847.85,971.01 1848.36,970.43 1848.85,969.82 1849.31,969.18 1849.74,968.51 1850.16,967.82 1850.54,967.10 1850.89,966.36 1851.22,965.60 1851.52,964.81 1851.78,964.00 1852.01,963.17 1852.22,962.33 1852.38,961.46 1852.52,960.58 1852.62,959.68 1852.68,958.77 1852.71,957.84 1852.70,956.91 1852.65,955.96 1852.56,955.00 1852.44,954.04 1852.28,953.07 1852.07,952.09 1851.83,951.11 1851.55,950.12 1851.23,949.14 1850.87,948.16 1850.47,947.17 1850.02,946.19 1849.54,945.22 1849.01,944.25 1848.45,943.29 1847.84,942.33 1847.19,941.39 1846.50,940.46 1845.77,939.54 1845.01,938.64 1844.20,937.75 1843.35,936.88 1842.46,936.03 1841.53,935.20 1840.57,934.39 1839.57,933.60 1838.53,932.84 1837.45,932.11 1836.34,931.40 1835.19,930.72 1834.01,930.07 1832.79,929.45 1831.55,928.87 1830.27,928.32 1828.95,927.80 1827.61,927.32 1826.24,926.87 1824.84,926.47 1823.42,926.11 1821.97,925.78 1820.49,925.50 1818.99,925.26 1817.47,925.06 1815.93,924.91 1814.36,924.81 1812.78,924.75 1811.19,924.74 1809.57,924.78 1807.95,924.86 1806.31,925.00 1804.65,925.19 1802.99,925.43 1801.32,925.72 1799.65,926.06 1797.97,926.45 1796.28,926.90 1794.60,927.41 1792.91,927.96 1791.23,928.57 1789.55,929.24 1787.87,929.96 1786.20,930.73 1784.54,931.56 1782.89,932.45 1781.25,933.39 1779.62,934.38 1778.01,935.44 1776.42,936.54 1774.84,937.70 1773.29,938.92 1771.76,940.19 1770.25,941.51 1768.76,942.89 1767.31,944.32 1765.88,945.80 1764.49,947.33 1763.13,948.92 1761.80,950.55 1760.51,952.24 1759.25,953.97 1758.04,955.75 1756.86,957.58 1755.73,959.46 1754.65,961.38 1753.60,963.34 1752.61,965.35 1751.66,967.40 1750.77,969.49 1749.93,971.62 1749.14,973.79 1748.40,976.00 1747.72,978.24 1747.10,980.52 1746.53,982.83 1746.03,985.17 1745.59,987.54 1745.20,989.93 1744.89,992.36 1744.63,994.81 1744.44,997.28 1744.32,999.77 1744.27,1002.28 1744.28,1004.81 1744.36,1007.36 1744.52,1009.92 1744.74,1012.49 1745.04,1015.07 1745.40,1017.66 1745.84,1020.26 1746.35,1022.86 1746.94,1025.46 1747.60,1028.06 1748.33,1030.66 1749.14,1033.25 1750.02,1035.84 1750.98,1038.42 1752.02,1040.99 1753.13,1043.55 1754.31,1046.09 1755.57,1048.62 1756.90,1051.12 1758.31,1053.61 1759.80,1056.07 1761.35,1058.50 1762.99,1060.91 1764.69,1063.28 1766.47,1065.63 1768.32,1067.94 1770.25,1070.21 1772.24,1072.44 1774.30,1074.63 1776.44,1076.78 1778.64,1078.89 1780.91,1080.94 1783.25,1082.95 1785.65,1084.90 1788.12,1086.81 1790.65,1088.65 1793.25,1090.44 1795.90,1092.17 1798.61,1093.84 1801.38,1095.44 1804.21,1096.98 1807.10,1098.45 1810.03,1099.85 1813.02,1101.18 1816.06,1102.44 1819.14,1103.63 1822.28,1104.74 1825.46,1105.77 1828.68,1106.72 1831.94,1107.59 1835.24,1108.39 1838.57,1109.09 1841.94,1109.72 1845.35,1110.25 1848.78,1110.71 1852.24,1111.07 1855.73,1111.34 1859.24,1111.52 1862.77,1111.61 1866.32,1111.61 1869.89,1111.52 1873.47,1111.33 1877.06,1111.05 1880.66,1110.67 1884.26,1110.20 1887.87,1109.62 1891.48,1108.96 1895.09,1108.19 1898.70,1107.33 1902.30,1106.36 1905.88,1105.31 1909.46,1104.15 1913.02,1102.89 1916.57,1101.53 1920.09,1100.08 1923.59,1098.53 1927.07,1096.88 1930.51,1095.13 1933.93,1093.29 1937.31,1091.35 1940.66,1089.31 1943.96,1087.18 1947.23,1084.95 1950.44,1082.63 1953.62,1080.21 1956.74,1077.70 1959.81,1075.10 1962.82,1072.41 1965.78,1069.63 1968.67,1066.77 1971.50,1063.81 1974.27,1060.78 1976.97,1057.65 1979.60,1054.45 1982.15,1051.16 1984.63,1047.80 1987.03,1044.36 1989.36,1040.84 1991.60,1037.25 1993.75,1033.59 1995.82,1029.85 1997.80,1026.05 1999.69,1022.19 2001.48,1018.26 2003.18,1014.27 2004.78,1010.22 2006.29,1006.11 2007.69,1001.95 2008.99,997.74 2010.19,993.48 2011.28,989.17 2012.26,984.82 2013.14,980.43 2013.90,976.00 2014.55,971.53 2015.09,967.04 2015.52,962.51 2015.82,957.95 2016.02,953.37 2016.09,948.77 2016.05,944.15 2015.88,939.52 2015.60,934.88 2015.20,930.22 2014.67,925.56 2014.02,920.90 2013.25,916.24 2012.36,911.58 2011.34,906.93 2010.21,902.29 2008.94,897.67 2007.56,893.06 2006.05,888.47 2004.41,883.91 2002.66,879.37 2000.78,874.86 1998.78,870.39 1996.66,865.95 1994.42,861.56 1992.05,857.21 1989.57,852.90 1986.97,848.64 1984.25,844.44 1981.41,840.30 1978.46,836.21 1975.39,832.19 1972.21,828.23 1968.92,824.34 1965.52,820.53 1962.01,816.79 1958.39,813.12 1954.67,809.55 1950.84,806.05 1946.92,802.64 1942.89,799.33 1938.76,796.10 1934.54,792.97 1930.23,789.95 1925.83,787.02 1921.34,784.19 1916.76,781.48 1912.10,778.87 1907.36,776.38 1902.54,774.00 1897.64,771.73 1892.67,769.59 1887.63,767.56 1882.53,765.66 1877.36,763.88 1872.14,762.24 1866.85,760.72 1861.51,759.33 1856.12,758.07 1850.68,756.95 1845.20,755.97 1839.68,755.12 1834.12,754.41 1828.52,753.85 1822.90,753.42 1817.25,753.14 1811.57,753.00 1805.88,753.00 1800.17,753.16 1794.45,753.45 1788.72,753.90 1782.98,754.49 1777.25,755.23 1771.52,756.12 1765.80,757.16 1760.08,758.35 1754.38,759.69 1748.71,761.17 1743.05,762.81 1737.42,764.60 1731.82,766.53 1726.26,768.61 1720.73,770.84 1715.25,773.22 1709.81,775.74 1704.43,778.41 1699.09,781.22 1693.82,784.18 1688.61,787.28 1683.46,790.52 1678.38,793.90 1673.38,797.42 1668.45,801.08 1663.60,804.87 1658.84,808.79 1654.17,812.85 1649.59,817.03 1645.10,821.35 1640.71,825.79 1636.43,830.35 1632.25,835.03 1628.17,839.83 1624.22,844.75 1620.37,849.78 1616.65,854.92 1613.05,860.16 1609.57,865.52 1606.22,870.97 1603.00,876.52 1599.92,882.17 1596.97,887.91 1594.16,893.74 1591.50,899.66 1588.97,905.66 1586.60,911.73 1584.37,917.89 1582.30,924.11 1580.38,930.40 1578.61,936.75 1577.01,943.17 1575.56,949.64 1574.27,956.16 1573.15,962.73 1572.19,969.35 1571.40,976.00 1570.78,982.69 1570.32,989.41 1570.04,996.16 1569.92,1002.93 1569.98,1009.72 1570.21,1016.52 1570.62,1023.34 1571.20,1030.15 1571.95,1036.97 1572.88,1043.79 1573.99,1050.59 1575.27,1057.39 1576.73,1064.16 1578.36,1070.92 1580.17,1077.65 1582.15,1084.34 1584.31,1091.00 1586.65,1097.62 1589.15,1104.20 1591.83,1110.73 1594.68,1117.20 1597.71,1123.61 1600.90,1129.97 1604.26,1136.25 1607.79,1142.46 1611.48,1148.60 1615.34,1154.65 1619.36,1160.62 1623.54,1166.50 1627.88,1172.29 1632.37,1177.98 1637.02,1183.56 1641.82,1189.04 1646.77,1194.41 1651.87,1199.66 1657.11,1204.80 1662.49,1209.81 1668.02,1214.70 1673.67,1219.46 1679.46,1224.08 1685.38,1228.57 1691.43,1232.91 1697.60,1237.11 1703.89,1241.16 1710.29,1245.06 1716.81,1248.80 1723.43,1252.39 1730.16,1255.82 1736.99,1259.08 1743.92,1262.17 1750.94,1265.10 1758.04,1267.85 1765.24,1270.43 1772.51,1272.83 1779.85,1275.05 1787.27,1277.09 1794.76,1278.94 1802.30,1280.61 1809.91,1282.08 1817.56,1283.37 1825.27,1284.47 1833.01,1285.37 1840.80,1286.08 1848.61,1286.59 1856.46,1286.91 1864.33,1287.02 1872.22,1286.94 1880.12,1286.65 1888.03,1286.17 1895.94,1285.48 1903.85,1284.59 1911.75,1283.50 1919.63,1282.20 1927.51,1280.71 1935.35,1279.01 1943.17,1277.10 1950.96,1275.00 1958.70,1272.69 1966.41,1270.19 1974.06,1267.48 1981.66,1264.57 1989.20,1261.47 1996.67,1258.17 2004.08,1254.67 2011.41,1250.98 2018.66,1247.10 2025.82,1243.02 2032.90,1238.76 2039.87,1234.31 2046.75,1229.67 2053.53,1224.85 2060.19,1219.85 2066.74,1214.67 2073.17,1209.32 2079.47,1203.79 2085.65,1198.09 2091.69,1192.23 2097.59,1186.20 2103.36,1180.02 2108.97,1173.67 2114.44,1167.17 2119.75,1160.53 2124.90,1153.73 2129.88,1146.79 2134.70,1139.72 2139.35,1132.51 2143.83,1125.17 2148.12,1117.70 2152.24,1110.11 2156.17,1102.41 2159.91,1094.59 2163.46,1086.66 2166.81,1078.63 2169.97,1070.50 2172.92,1062.28 2175.67,1053.96 2178.22,1045.57 2180.56,1037.09 2182.68,1028.54 2184.60,1019.92 2186.29,1011.24 2187.78,1002.51" fill="none" stroke="#3f74b8" stroke-width="3.6" stroke-linejoin="round" stroke-linecap="square"/>
<circle cx="1836.9" cy="976.0" r="369.5" fill="none" stroke="#2b2b2b" stroke-width="2.4"/>
<text x="1836.00" y="576.60" font-family='"Liberation Sans", sans-serif' font-size="25" fill="#1c1c1c" text-anchor="middle" font-weight="normal" textLength="44.00" lengthAdjust="spacingAndGlyphs" stroke="#1c1c1c" stroke-width="0.2">90°</text>
<text x="2122.90" y="695.70" font-family='"Liberation Sans", sans-serif' font-size="25" fill="#1c1c1c" text-anchor="middle" font-weight="normal" textLength="44.00" lengthAdjust="spacingAndGlyphs" stroke="#1c1c1c" stroke-width="0.2">45°</text>
<text x="2242.90" y="982.80" font-family='"Liberation Sans", sans-serif' font-size="25" fill="#1c1c1c" text-anchor="middle" font-weight="normal" textLength="30.00" lengthAdjust="spacingAndGlyphs" stroke="#1c1c1c" stroke-width="0.2">0°</text>
<text x="1548.70" y="695.70" font-family='"Liberation Sans", sans-serif' font-size="25" fill="#1c1c1c" text-anchor="middle" font-weight="normal" textLength="58.70" lengthAdjust="spacingAndGlyphs" stroke="#1c1c1c" stroke-width="0.2">135°</text>
<text x="1427.60" y="982.80" font-family='"Liberation Sans", sans-serif' font-size="25" fill="#1c1c1c" text-anchor="middle" font-weight="normal" textLength="59.50" lengthAdjust="spacingAndGlyphs" stroke="#1c1c1c" stroke-width="0.2">180°</text>
<text x="1548.50" y="1271.40" font-family='"Liberation Sans", sans-serif' font-size="25" fill="#1c1c1c" text-anchor="middle" font-weight="normal" textLength="58.70" lengthAdjust="spacingAndGlyphs" stroke="#1c1c1c" stroke-width="0.2">225°</text>
<text x="1835.20" y="1391.40" font-family='"Liberation Sans", sans-serif' font-size="25" fill="#1c1c1c" text-anchor="middle" font-weight="normal" textLength="58.70" lengthAdjust="spacingAndGlyphs" stroke="#1c1c1c" stroke-width="0.2">270°</text>
<text x="2123.80" y="1271.40" font-family='"Liberation Sans", sans-serif' font-size="25" fill="#1c1c1c" text-anchor="middle" font-weight="normal" textLength="58.70" lengthAdjust="spacingAndGlyphs" stroke="#1c1c1c" stroke-width="0.2">315°</text>
<text x="1939.50" y="937.00" font-family='"Liberation Sans", sans-serif' font-size="25" fill="#1c1c1c" text-anchor="middle" font-weight="normal" textLength="42.00" lengthAdjust="spacingAndGlyphs" stroke="#1c1c1c" stroke-width="0.2">0.5</text>
<text x="2020.50" y="903.80" font-family='"Liberation Sans", sans-serif' font-size="25" fill="#1c1c1c" text-anchor="middle" font-weight="normal" textLength="42.00" lengthAdjust="spacingAndGlyphs" stroke="#1c1c1c" stroke-width="0.2">1.0</text>
<text x="2102.40" y="869.50" font-family='"Liberation Sans", sans-serif' font-size="25" fill="#1c1c1c" text-anchor="middle" font-weight="normal" textLength="42.00" lengthAdjust="spacingAndGlyphs" stroke="#1c1c1c" stroke-width="0.2">1.5</text>
<text x="2183.30" y="835.20" font-family='"Liberation Sans", sans-serif' font-size="25" fill="#1c1c1c" text-anchor="middle" font-weight="normal" textLength="42.00" lengthAdjust="spacingAndGlyphs" stroke="#1c1c1c" stroke-width="0.2">2.0</text>
<text x="1335.50" y="1465.70" font-family='"Liberation Sans", sans-serif' font-size="31.5" fill="#5b6670" text-anchor="start" font-weight="normal" textLength="471.00" lengthAdjust="spacingAndGlyphs" stroke="#5b6670" stroke-width="0.3">Figure 1: A line plot on a polar axis</text>
<defs><filter id="tex" x="0" y="0" width="100%" height="100%" filterUnits="objectBoundingBox" color-interpolation-filters="sRGB"><feTurbulence type="fractalNoise" baseFrequency="0.012 0.03" numOctaves="4" seed="7" result="n"/><feColorMatrix in="n" type="matrix" values="0.7 0 0 0 0.06  0.32 0 0 0 0.03  0.09 0 0 0 0.01  0 0 0 0 1"/></filter></defs>
<rect x="1335.5" y="1512.5" width="983.5" height="35.5" fill="#6b3312"/>
<rect x="1335.5" y="1512.5" width="983.5" height="35.5" filter="url(#tex)"/>
<rect x="0" y="1556" width="2400" height="44" rx="0" fill="#181818"/>
<line x1="0" y1="1556.5" x2="2400" y2="1556.5" stroke="#2b2b2b" stroke-width="1.5"/>
<circle cx="43.5" cy="1578" r="11" fill="none" stroke="#cccccc" stroke-width="2"/>
<line x1="38.5" y1="1573" x2="48.5" y2="1583" stroke="#cccccc" stroke-width="2"/>
<line x1="48.5" y1="1573" x2="38.5" y2="1583" stroke="#cccccc" stroke-width="2"/>
<text x="65.50" y="1586.30" font-family='"Liberation Sans", sans-serif' font-size="24" fill="#cccccc" text-anchor="start" font-weight="normal" textLength="13.50" lengthAdjust="spacingAndGlyphs" stroke="#cccccc" stroke-width="0.45">0</text>
<path d="M100.5 1567 L111.5 1589 L89.5 1589 Z" stroke="#cccccc" stroke-width="2" fill="none" stroke-linejoin="round"/>
<line x1="100.5" y1="1574.5" x2="100.5" y2="1582" stroke="#cccccc" stroke-width="2"/>
<circle cx="100.5" cy="1585.2" r="1.3" fill="#cccccc"/>
<text x="122.50" y="1586.30" font-family='"Liberation Sans", sans-serif' font-size="24" fill="#cccccc" text-anchor="start" font-weight="normal" textLength="13.00" lengthAdjust="spacingAndGlyphs" stroke="#cccccc" stroke-width="0.45">0</text>
<text x="169.00" y="1586.30" font-family='"Liberation Sans", sans-serif' font-size="24" fill="#cccccc" text-anchor="start" font-weight="normal" textLength="177.00" lengthAdjust="spacingAndGlyphs" stroke="#cccccc" stroke-width="0.45">Julia env: v1.10</text>
<text x="379.50" y="1586.30" font-family='"Liberation Sans", sans-serif' font-size="24" fill="#cccccc" text-anchor="start" font-weight="normal" textLength="149.50" lengthAdjust="spacingAndGlyphs" stroke="#cccccc" stroke-width="0.45">Quarto: 1.8.4</text>
<text x="1646.50" y="1586.30" font-family='"Liberation Sans", sans-serif' font-size="24" fill="#cccccc" text-anchor="start" font-weight="normal" textLength="151.50" lengthAdjust="spacingAndGlyphs" stroke="#cccccc" stroke-width="0.45">Ln 19, Col 22</text>
<text x="1832.00" y="1586.30" font-family='"Liberation Sans", sans-serif' font-size="24" fill="#cccccc" text-anchor="start" font-weight="normal" textLength="110.00" lengthAdjust="spacingAndGlyphs" stroke="#cccccc" stroke-width="0.45">Spaces: 2</text>
<text x="1976.00" y="1586.30" font-family='"Liberation Sans", sans-serif' font-size="24" fill="#cccccc" text-anchor="start" font-weight="normal" textLength="71.50" lengthAdjust="spacingAndGlyphs" stroke="#cccccc" stroke-width="0.45">UTF-8</text>
<text x="2081.50" y="1586.30" font-family='"Liberation Sans", sans-serif' font-size="24" fill="#cccccc" text-anchor="start" font-weight="normal" textLength="25.50" lengthAdjust="spacingAndGlyphs" stroke="#cccccc" stroke-width="0.45">LF</text>
<text x="2139.50" y="1586.30" font-family='"Liberation Sans", sans-serif' font-size="24" fill="#cccccc" text-anchor="start" font-weight="normal" textLength="21.50" lengthAdjust="spacingAndGlyphs" stroke="#cccccc" stroke-width="0.45">{ }</text>
<text x="2176.50" y="1586.30" font-family='"Liberation Sans", sans-serif' font-size="24" fill="#cccccc" text-anchor="start" font-weight="normal" textLength="76.50" lengthAdjust="spacingAndGlyphs" stroke="#cccccc" stroke-width="0.45">Quarto</text>
<g fill="none" stroke="#cccccc" stroke-width="2"><path d="M2286 1574 Q2286 1567 2295.5 1567 Q2305 1567 2305 1574 L2305 1584 Q2305 1590 2295.5 1590 Q2286 1590 2286 1584 Z"/><circle cx="2291.5" cy="1575.5" r="3"/><circle cx="2299.5" cy="1575.5" r="3"/></g>
<circle cx="2292.5" cy="1583" r="1" fill="#cccccc"/>
<circle cx="2295.5" cy="1583" r="1" fill="#cccccc"/>
<circle cx="2298.5" cy="1583" r="1" fill="#cccccc"/>
<rect x="2283" y="1575" width="3" height="5" rx="1.5" fill="#cccccc"/>
<rect x="2305" y="1575" width="3" height="5" rx="1.5" fill="#cccccc"/>
<path d="M2357 1566.5 Q2349 1567.5 2349 1576 L2349 1582.5 L2346 1586.5 L2367 1586.5 L2364.5 1582.5 L2363.5 1577" stroke="#cccccc" stroke-width="2" fill="none" stroke-linejoin="round"/>
<circle cx="2356.5" cy="1590" r="2.5" fill="#cccccc"/><circle cx="2363" cy="1571" r="5" fill="#cccccc"/>
</g>
<clipPath id="topc"><rect x="0" y="0" width="2400" height="10"/></clipPath>
<rect x="0.75" y="0.75" width="2398.5" height="1640" rx="16" fill="none" stroke="#4a4a4a" stroke-width="1.8" clip-path="url(#topc)"/>
</svg>
</body></html>
